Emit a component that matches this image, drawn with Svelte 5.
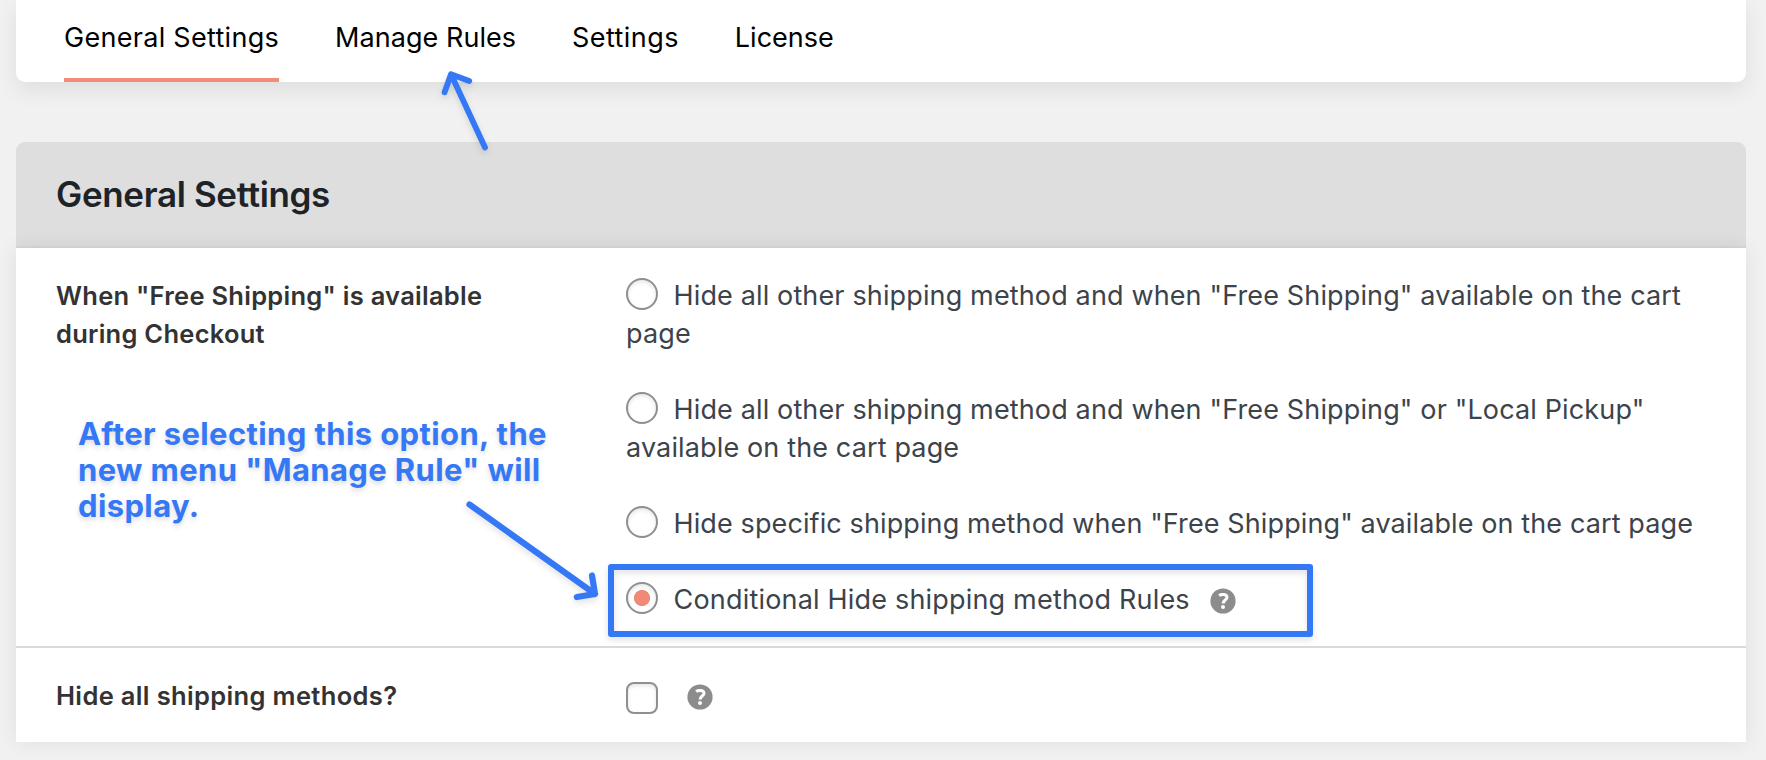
<script>
  const tabs = ['General Settings', 'Manage Rules', 'Settings', 'License'];
  const options = [
    'Hide all other shipping method and when "Free Shipping" available on the cart page',
    'Hide all other shipping method and when "Free Shipping" or "Local Pickup" available on the cart page',
    'Hide specific shipping method when "Free Shipping" available on the cart page',
    'Conditional Hide shipping method Rules'
  ];
  let activeTab = $state(0);
  let selected = $state(3);
  let hideAll = $state(false);
</script>

{#snippet help()}
  <svg class="help" viewBox="0 0 26 26" role="img" aria-label="Help">
    <circle cx="13" cy="13" r="12.6" fill="#8c8c8c" />
    <path d="M9.1 7.5C11.4 5.9 17.1 5.7 17 9.5C16.9 12 13.2 12.2 13.1 15.5" fill="none" stroke="#fff" stroke-width="3" />
    <circle cx="13" cy="19.1" r="2" fill="#fff" />
  </svg>
{/snippet}

<main>
  <nav>
    {#each tabs as tab, i}
      <button class="tab" class:active={i === activeTab} onclick={() => (activeTab = i)}>{tab}</button>
    {/each}
  </nav>

  <section>
    <header><h2>General Settings</h2></header>
    <div class="body">
      <div class="row">
        <div class="label">When "Free Shipping" is available<br />during Checkout</div>
        <div class="options">
          {#each options as option, i}
            <label class="option">
              <input type="radio" name="mode" checked={i === selected} onchange={() => (selected = i)} />{option}{#if i === 3}{@render help()}{/if}
            </label>
          {/each}
        </div>
      </div>
      <div class="row second">
        <div class="label">Hide all shipping methods?</div>
        <div class="check">
          <input type="checkbox" bind:checked={hideAll} aria-label="Hide all shipping methods?" />
          {@render help()}
        </div>
      </div>
    </div>
  </section>

  <p class="note">After selecting this option, the<br />new menu "Manage Rule" will<br />display.</p>
  <div class="highlight"></div>
  <svg class="arrows" width="1766" height="760" viewBox="0 0 1766 760" aria-hidden="true">
    <g fill="none" stroke="#3478f6" stroke-linecap="round" stroke-linejoin="round">
      <path stroke-width="5.8" d="M485 147.5L451 74.3M444.6 92.3L451 74.3L469.2 81" />
      <path stroke-width="6.2" d="M469.5 504.5L595 594M592 575.5L595 594L576.8 597" />
    </g>
  </svg>
</main>

<style>
  :global(body) {
    background: #f1f1f1;
  }

  main {
    position: relative;
    box-sizing: border-box;
    height: 760px;
    padding: 0 20px 0 16px;
    overflow: hidden;
    font-family: Inter, sans-serif;
    background: #f1f1f1;
  }

  nav {
    display: flex;
    align-items: flex-end;
    gap: 56px;
    height: 82px;
    padding: 0 48px;
    border-radius: 0 0 9px 9px;
    background: #fff;
    box-shadow: 0 8px 22px rgba(0, 0, 0, 0.08);
  }

  .tab {
    margin: 0;
    padding: 0 0 21px;
    border: 0;
    border-bottom: 4px solid transparent;
    background: none;
    color: #000;
    font: 400 27px/38px Inter, sans-serif;
    letter-spacing: 0.29px;
    white-space: nowrap;
  }

  .tab:nth-child(2) {
    letter-spacing: 0.05px;
  }

  .tab:nth-child(3) {
    letter-spacing: 0.42px;
  }

  .tab:nth-child(4) {
    letter-spacing: 0;
  }

  .active {
    border-bottom-color: #f38b77;
  }

  section {
    margin-top: 60px;
  }

  header {
    display: flex;
    align-items: center;
    height: 104px;
    padding: 0 40px;
    border-bottom: 2px solid #d7d7d7;
    border-radius: 9px 9px 0 0;
    background: #dedede;
  }

  h2 {
    margin: 0;
    color: #1d2327;
    font-size: 35px;
    line-height: 42px;
    font-weight: 600;
    letter-spacing: -0.34px;
  }

  .body {
    background: #fff;
    box-shadow: 0 0 20px rgba(0, 0, 0, 0.08);
  }

  .row {
    display: grid;
    grid-template-columns: 570px 1fr;
    padding: 29px 40px 27px;
  }

  .second {
    padding: 28px 40px;
    border-top: 2px solid #d9d9d9;
  }

  .label {
    color: #333;
    font-size: 25.5px;
    line-height: 38px;
    font-weight: 600;
    letter-spacing: 0.26px;
  }

  .second .label {
    height: 37px;
    padding-top: 1px;
    letter-spacing: 0.35px;
  }

  .options {
    display: flex;
    flex-direction: column;
    gap: 38px;
  }

  .option {
    display: block;
    color: #3c434a;
    font-size: 27px;
    line-height: 38px;
    letter-spacing: 0.14px;
  }

  .option:nth-child(3) {
    letter-spacing: 0.11px;
  }

  .option:last-child {
    letter-spacing: 0.19px;
  }

  input {
    appearance: none;
    box-sizing: border-box;
    width: 32px;
    height: 32px;
    margin: 0;
    border: 2px solid #8c8f94;
    background: #fff;
    box-shadow: inset 0 2px 4px rgba(0, 0, 0, 0.1);
  }

  input[type='radio'] {
    margin-right: 15.5px;
    border-radius: 50%;
    vertical-align: -5px;
  }

  input[type='radio']:checked {
    background: radial-gradient(circle, #f08a76 7.7px, #fff 8.4px);
  }

  input[type='checkbox'] {
    border-radius: 8px;
  }

  .help {
    width: 26px;
    height: 26px;
  }

  .option .help {
    margin-left: 20px;
    vertical-align: -5px;
  }

  .check {
    display: flex;
    align-items: flex-start;
    gap: 28.5px;
    padding-top: 6px;
  }

  .check .help {
    margin-top: 2px;
  }

  .note {
    position: absolute;
    left: 78px;
    top: 416px;
    margin: 0;
    color: #3478f6;
    font-size: 31px;
    line-height: 36px;
    font-weight: 700;
    letter-spacing: 0.38px;
    white-space: nowrap;
    text-shadow: 0 3px 5px rgba(0, 0, 0, 0.14);
  }

  .highlight {
    position: absolute;
    box-sizing: border-box;
    left: 608px;
    top: 563.5px;
    width: 705px;
    height: 73px;
    border: 6px solid #3478f6;
    border-radius: 3px;
    filter: drop-shadow(0 3px 3px rgba(0, 0, 0, 0.12));
    pointer-events: none;
  }

  .arrows {
    position: absolute;
    left: 0;
    top: 0;
    filter: drop-shadow(0 3px 3px rgba(0, 0, 0, 0.12));
    pointer-events: none;
  }
</style>
